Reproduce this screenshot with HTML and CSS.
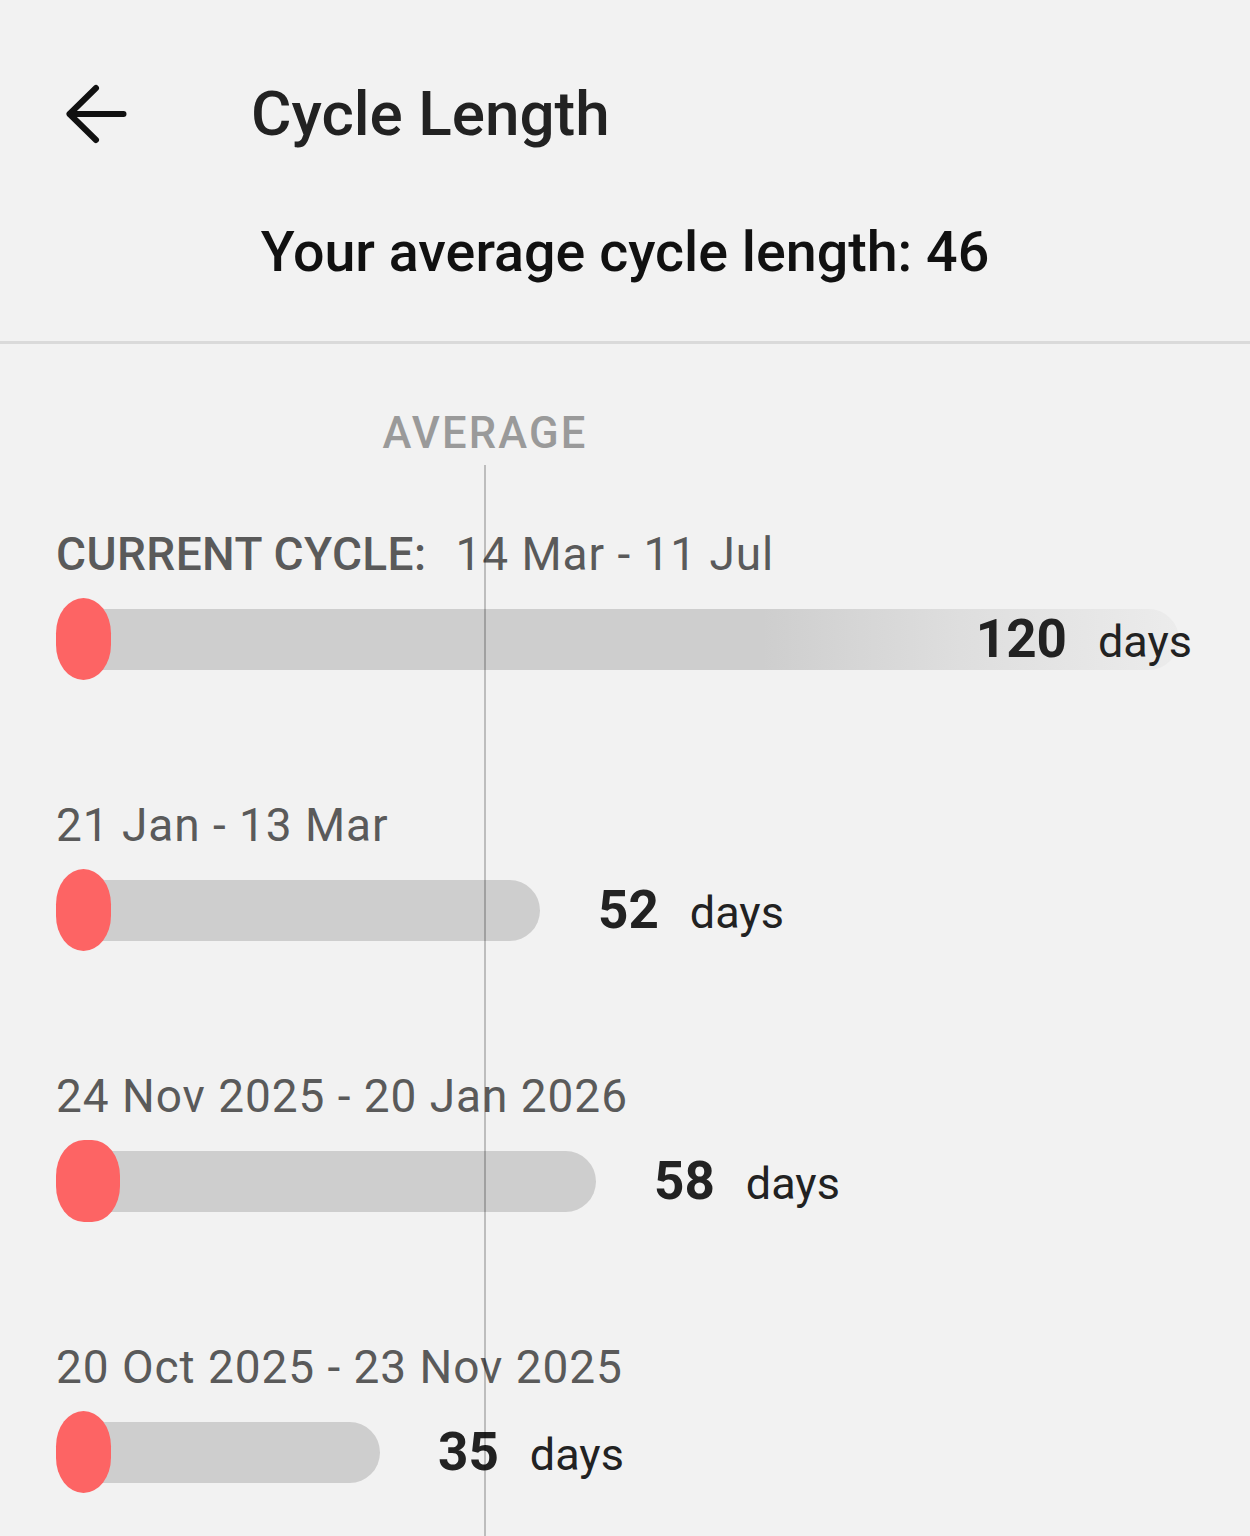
FILE: index.html
```html
<!DOCTYPE html>
<html lang="en">
<head>
<meta charset="utf-8">
<title>Cycle Length</title>
<link rel="stylesheet" href="styles.css">
</head>
<body>
<div class="screen">
  <header class="topbar">
    <button class="back" aria-label="Back">
      <svg width="70" height="70" viewBox="0 0 70 70" aria-hidden="true">
        <path d="M7.5 35 H61.5 M34 9 L7.5 35 L34 61" fill="none" stroke="#111" stroke-width="6" stroke-linecap="round" stroke-linejoin="round"/>
      </svg>
    </button>
    <h1 class="title">Cycle Length</h1>
  </header>
  <p class="summary">Your average cycle length: 46</p>
  <hr class="divider">
  <section class="chart">
    <div class="avg-marker" style="left:485px">
      <span class="avg-label">AVERAGE</span>
      <span class="avg-line"></span>
    </div>

    <div class="cycle">
      <div class="cycle-label"><span class="current">CURRENT CYCLE:</span><span>14 Mar - 11 Jul</span></div>
      <div class="track stacked">
        <div class="bar-wrap">
          <div class="bar fade" style="width:1096px"></div>
          <div class="period" style="width:55px"></div>
        </div>
        <div class="value"><b>120</b><span>days</span></div>
      </div>
    </div>

    <div class="cycle">
      <div class="cycle-label"><span>21 Jan - 13 Mar</span></div>
      <div class="track">
        <div class="bar-wrap">
          <div class="bar" style="width:457px"></div>
          <div class="period" style="width:55px"></div>
        </div>
        <div class="value"><b>52</b><span>days</span></div>
      </div>
    </div>

    <div class="cycle">
      <div class="cycle-label"><span>24 Nov 2025 - 20 Jan 2026</span></div>
      <div class="track">
        <div class="bar-wrap">
          <div class="bar" style="width:513px"></div>
          <div class="period" style="width:64px"></div>
        </div>
        <div class="value"><b>58</b><span>days</span></div>
      </div>
    </div>

    <div class="cycle">
      <div class="cycle-label"><span>20 Oct 2025 - 23 Nov 2025</span></div>
      <div class="track">
        <div class="bar-wrap">
          <div class="bar" style="width:297px"></div>
          <div class="period" style="width:55px"></div>
        </div>
        <div class="value"><b>35</b><span>days</span></div>
      </div>
    </div>
  </section>
</div>
</body>
</html>
```

FILE: styles.css
```css
* { box-sizing: border-box; }
html, body {
  margin: 0;
  padding: 0;
  background: #f2f2f2;
}
body {
  font-family: Roboto, "Noto Sans", "Liberation Sans", sans-serif;
  color: #222;
  width: 1250px;
  height: 1536px;
  overflow: hidden;
}
.screen {
  display: flex;
  flex-direction: column;
  height: 1536px;
}
.topbar {
  display: flex;
  align-items: center;
  height: 60px;
  margin-top: 84px;
  padding-left: 62px;
}
.back {
  display: flex;
  align-items: center;
  justify-content: center;
  width: 70px;
  height: 70px;
  padding: 0;
  margin: 0;
  border: 0;
  background: none;
}
.title {
  margin: 0 0 0 119px;
  font-size: 62px;
  line-height: 60px;
  font-weight: 500;
  color: #222;
  letter-spacing: 0;
}
.summary {
  margin: 78px 0 0;
  text-align: center;
  font-size: 55.6px;
  line-height: 60px;
  font-weight: 500;
  color: #111;
}
.divider {
  margin: 59px 0 0;
  border: 0;
  height: 3px;
  background: #dadada;
}
.chart {
  position: relative;
  flex: 1;
  padding: 183px 58px 0 56px;
  display: flex;
  flex-direction: column;
  gap: 118px;
}
.avg-marker {
  position: absolute;
  top: 0;
  bottom: 0;
  width: 0;
  display: flex;
  flex-direction: column;
  align-items: center;
  z-index: 2;
}
.avg-label {
  margin-top: 65px;
  font-size: 43.5px;
  line-height: 50px;
  font-weight: 500;
  letter-spacing: 2.2px;
  color: #9a9a9a;
  white-space: nowrap;
}
.avg-line {
  flex: 1;
  width: 2px;
  margin-top: 6px;
  background: rgba(0, 0, 0, 0.22);
}
.cycle {
  display: flex;
  flex-direction: column;
  gap: 17px;
}
.cycle-label {
  display: flex;
  gap: 29px;
  font-size: 46px;
  line-height: 54px;
  color: #5a5a5a;
  letter-spacing: 0.95px;
  white-space: nowrap;
}
.cycle-label .current {
  font-weight: 500;
  letter-spacing: 0.4px;
}
.track {
  display: flex;
  align-items: center;
  height: 82px;
}
.track.stacked {
  display: grid;
  align-items: center;
}
.track.stacked > * {
  grid-area: 1 / 1;
}
.track.stacked .value {
  justify-self: end;
  margin-left: 0;
}
.bar-wrap {
  display: grid;
  align-items: center;
  height: 82px;
}
.bar-wrap > * {
  grid-area: 1 / 1;
}
.bar {
  height: 61px;
  margin-left: 27px;
  border-radius: 0 31px 31px 0;
  background: #cecece;
}
.bar.fade {
  background: linear-gradient(to right, #cecece 0%, #cecece 62%, #dedede 80%, #ececec 100%);
}
.period {
  height: 82px;
  border-radius: 28px / 36px;
  background: #fd6464;
}
.value {
  display: flex;
  align-items: baseline;
  gap: 31px;
  margin-left: 58px;
  white-space: nowrap;
}
.value b {
  font-size: 53px;
  font-weight: 700;
  color: #222;
}
.value span {
  font-size: 45px;
  font-weight: 400;
  color: #222;
}
```
